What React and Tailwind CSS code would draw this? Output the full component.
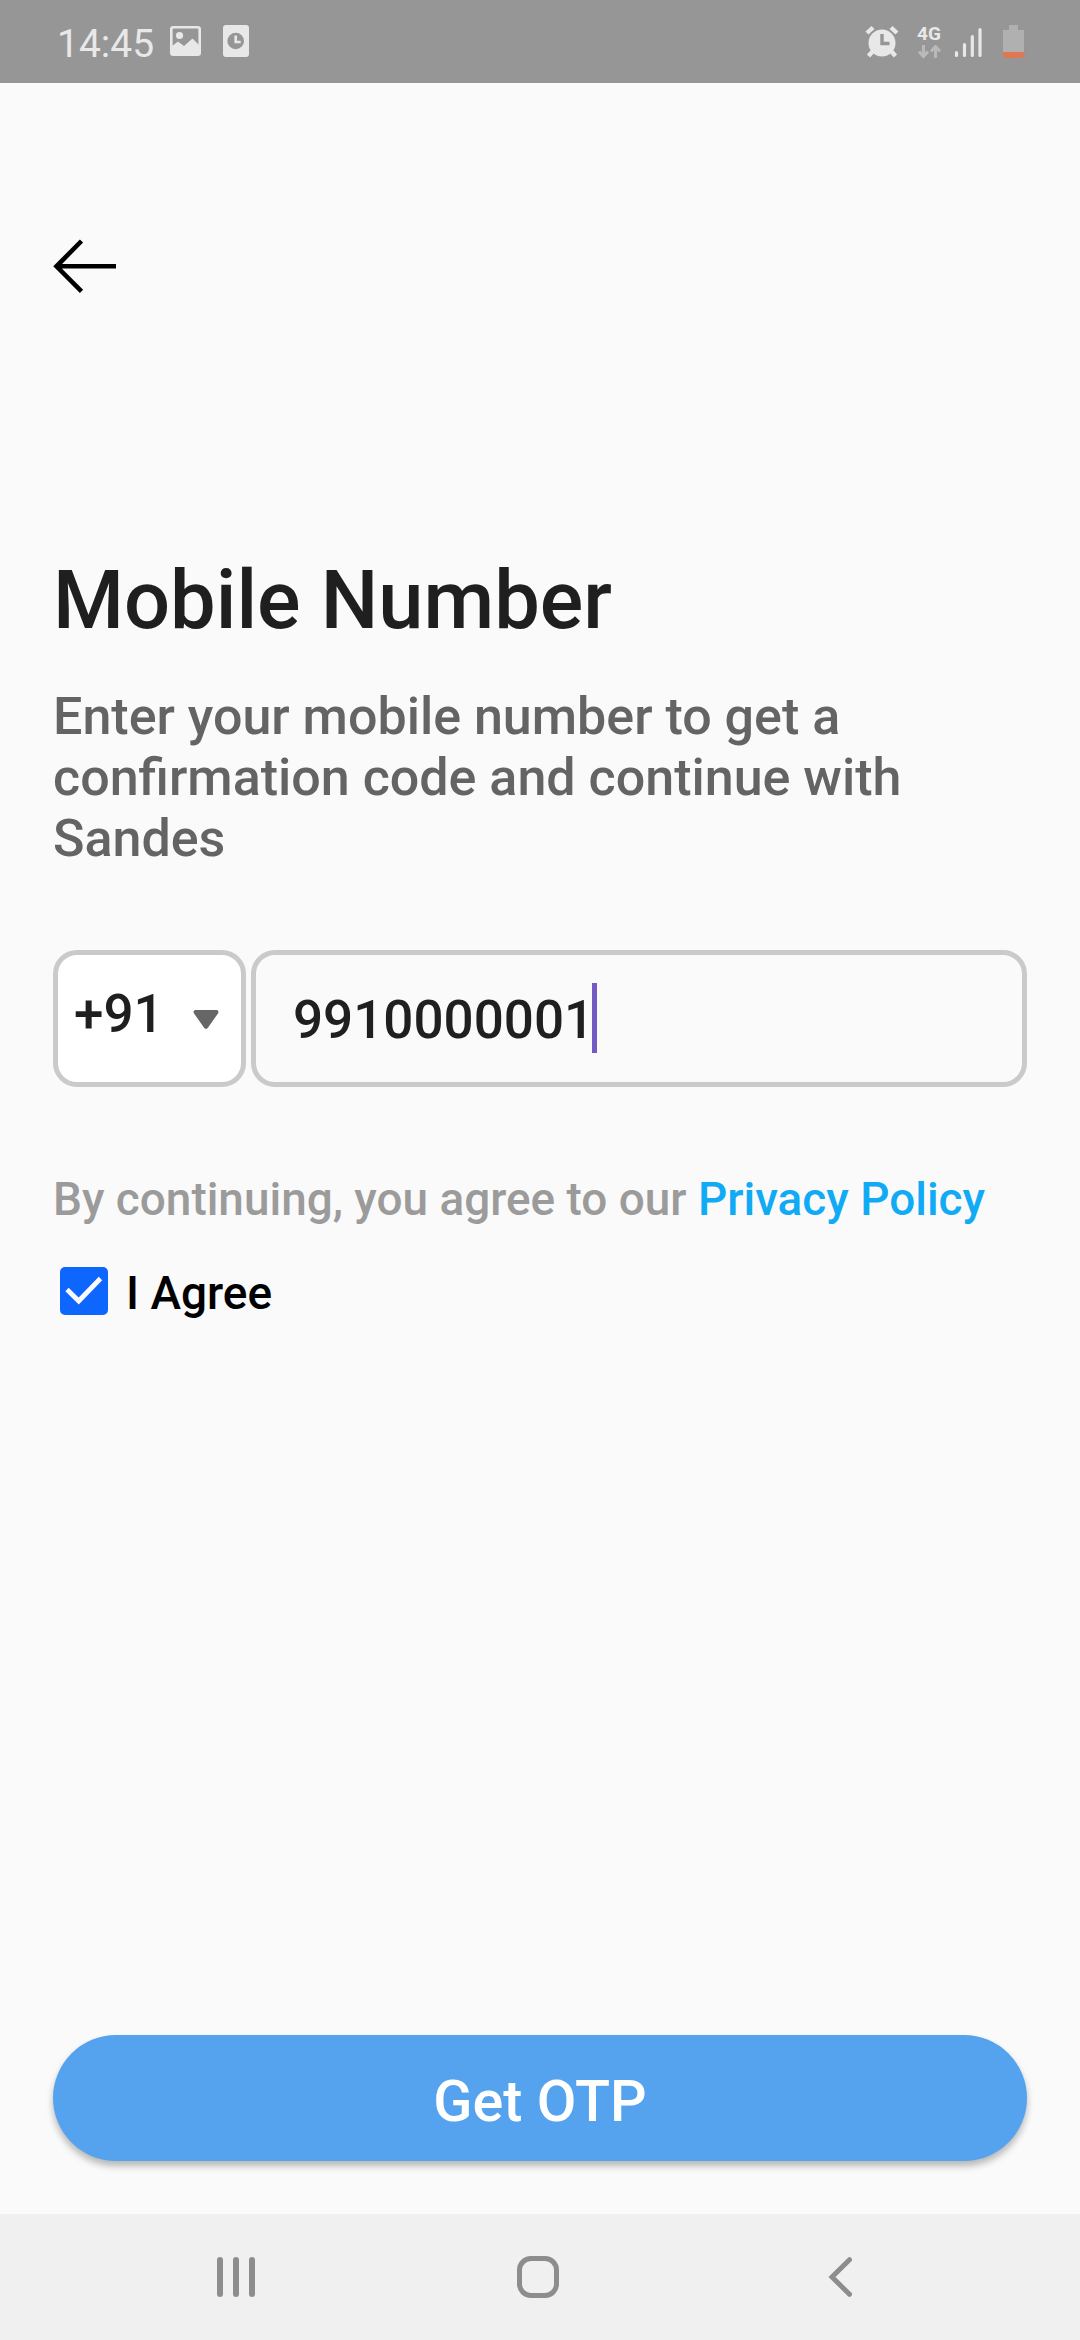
import { useState } from 'react';

const StatusBar = () => (
  <header className="flex h-[83px] items-start justify-between bg-[#969696] pl-[57px] pr-[52px] text-[#e8e8e8]">
    <div className="flex">
      <span className="mt-[21px] w-[113px] text-[39px] leading-[47px]">14:45</span>
      <svg className="mt-[26px] h-[30px] w-[31px]" viewBox="0 0 31 30" fill="none">
        <rect x="1.3" y="1.3" width="28.4" height="27.4" rx="2" stroke="currentColor" strokeWidth="2.6" />
        <circle cx="9.5" cy="9.5" r="3.6" fill="currentColor" />
        <path d="M1.5 20.5l6.5-5 6 4.5 8.5-7.5 7 7V28.5h-28z" fill="currentColor" />
      </svg>
      <svg className="ml-[22px] mt-[25px] h-8 w-[26px]" viewBox="0 0 26 32" fill="none">
        <rect width="26" height="32" rx="3" fill="currentColor" />
        <circle cx="12.7" cy="16" r="8.3" fill="#969696" />
        <path d="M12.7 10.5V17h5" stroke="currentColor" strokeWidth="2.6" />
      </svg>
    </div>
    <div className="flex">
      <svg className="mt-[25px] h-[33px] w-[34px]" viewBox="0 0 34 33" fill="none">
        <path d="M2 8l6-5.500M32 8l-6-5.500M8 26l-4.500 5M26 26l4.500 5" stroke="currentColor" strokeWidth="4.400" />
        <circle cx="17" cy="18" r="13.500" fill="currentColor" />
        <path d="M17 9v9.500h7.500" stroke="#969696" strokeWidth="3.400" />
      </svg>
      <div className="ml-[17px] mt-[23px] flex w-[26px] flex-col items-center">
        <span className="text-[19px] font-bold leading-[22px]">4G</span>
        <svg className="h-[14px] w-[23px]" viewBox="0 0 23 14" fill="none" stroke="#b9b9b9" strokeWidth="3">
          <path d="M5.500 0v12M1 6.500l4.500 5 4.500-5M17.500 13V2M13 6.500l4.500-5 4.500 5" />
        </svg>
      </div>
      <svg className="ml-[12px] mt-[26px] h-8 w-7" viewBox="0 0 28 32" fill="none" stroke="currentColor" strokeWidth="3.200" strokeLinecap="round">
        <path d="M2.500 26.500v3M10.500 18.500v11M18.300 10.500v19M26 3.500v26" />
      </svg>
      <svg className="ml-5 mt-[25px] h-[34px] w-[26px]" viewBox="0 0 26 34">
        <path d="M7 0h9v5h6v22H1V5h6z" fill="#b0b0b0" />
        <path d="M1 27h21v3q0 2-3 3H4q-3 0-3-3z" fill="#dd7850" />
        <path d="M22 27h3l-3 5z" fill="#dd7850" opacity=".4" />
      </svg>
    </div>
  </header>
);

const NavigationBar = () => (
  <nav className="flex h-[126px] items-center bg-[#f0f0f0] pl-[217px] text-[#8d8d8d]">
    <button aria-label="Recent apps" className="flex gap-[10px]">
      <span className="h-10 w-[6px] rounded-full bg-[#8d8d8d]" />
      <span className="h-10 w-[6px] rounded-full bg-[#8d8d8d]" />
      <span className="h-10 w-[6px] rounded-full bg-[#8d8d8d]" />
    </button>
    <button aria-label="Home" className="ml-[262px] size-[42px] rounded-[14px] border-5 border-[#8d8d8d]" />
    <button aria-label="Back" className="ml-[269px]">
      <svg className="block h-10 w-6" viewBox="0 0 24 40" fill="none" stroke="currentColor" strokeWidth="5" strokeLinecap="round">
        <path d="M21.500 2.700L4 20l17.500 17.300" />
      </svg>
    </button>
  </nav>
);

const App = () => {
  const [agreed, setAgreed] = useState(true);

  return (
    <div className="flex h-[2340px] w-[1080px] flex-col bg-[#fafafa] font-['Roboto',sans-serif]">
      <StatusBar />

      <main className="flex flex-1 flex-col px-[53px]">
        <button aria-label="Go back" className="mt-[156px] self-start">
          <svg className="block h-[54px] w-[63px]" viewBox="0 0 63 54" fill="none" stroke="#000" strokeWidth="4.600">
            <path d="M28.500 2L3.500 27.300l25 25M3.500 27.300H63" />
          </svg>
        </button>

        <h1 className="mt-[260px] text-[81.2px] font-medium leading-[96px] text-[#1f1f1f]">Mobile Number</h1>
        <p className="mt-[37px] text-[52px] font-medium leading-[61px] text-[#646464]">
          Enter your mobile number to get a<br />
          confirmation code and continue with<br />
          Sandes
        </p>

        <div className="mt-[81px] flex h-[137px] gap-[5px] text-[53px] font-medium leading-[62px] text-[#1f1f1f]">
          <button className="flex w-[193px] items-start rounded-[24px] border-5 border-[#cacaca] bg-white pl-4">
            <span className="mt-[28px] w-[118px] text-left">+91</span>
            <svg className="mt-[55px] h-[20px] w-[28px]" viewBox="0 0 28 22">
              <path d="M2 0h24q3 1 1 4L16.500 19q-2.500 4-5 0L1 4Q-1 1 2 0z" fill="#666" />
            </svg>
          </button>
          <div className="flex flex-1 items-start rounded-[24px] border-5 border-[#cacaca] pl-[37px]">
            <span className="mt-[34px] w-[299px]">9910000001</span>
            <span className="mt-7 h-[70px] w-[5px] bg-[#7359c4]" />
          </div>
        </div>

        <p className="mt-[85px] whitespace-nowrap text-[45.9px] font-medium leading-[54px] text-[#9b9b9b]">
          By continuing, you agree to our <a className="text-[#10aaf5]">Privacy Policy</a>
        </p>
        <button
          role="checkbox"
          aria-checked={agreed}
          onClick={() => setAgreed(!agreed)}
          className="mt-[40px] flex h-[54px] items-center self-start pl-[7px] text-[46px] font-medium leading-[54px] text-black"
        >
          <svg className="mb-1 mr-[18px] size-12" viewBox="0 0 48 48" fill="none">
            <rect width="48" height="48" rx="5" fill="#0d67ff" />
            {agreed && <path d="M7 22.500l11.700 11.500L40.500 11.500" stroke="#fafafa" strokeWidth="4.800" />}
          </svg>
          I Agree
        </button>

        <button className="mb-[53px] mt-auto h-[126px] rounded-full bg-[#55a3ee] pt-[6px] text-[57.5px] font-medium leading-[67px] text-white shadow-[0_5px_7px_rgba(0,0,0,0.27)]">
          Get OTP
        </button>
      </main>

      <NavigationBar />
    </div>
  );
};

export default App;
